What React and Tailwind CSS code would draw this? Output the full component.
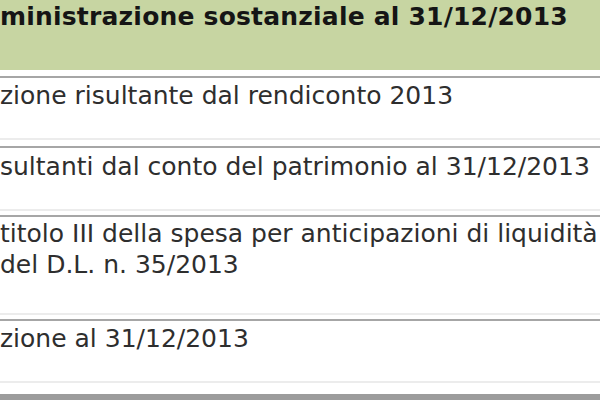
export default function App() {
  const rows = [
    { h: "h-[64px]", pt: "pt-[2px]", lines: ["zione risultante dal rendiconto 2013"] },
    { h: "h-[65px]", pt: "pt-[3px]", lines: ["sultanti dal conto del patrimonio al 31/12/2013"] },
    {
      h: "h-[100px]",
      pt: "pt-[1px]",
      lines: ["titolo III della spesa per anticipazioni di liquidità", "del D.L. n. 35/2013"],
    },
    { h: "h-[64px]", pt: "pt-[2px]", lines: ["zione al 31/12/2013"] },
  ];

  return (
    <div className="w-[600px] h-[400px] overflow-hidden bg-white font-['DejaVu_Sans',Verdana,sans-serif] text-[25px] text-[#2e2e2e]">
      <div className="h-[70px] bg-[#c7d5a2] pt-[2px] leading-[30px] font-bold tracking-[0.2px] text-[#151515] whitespace-nowrap">
        ministrazione sostanziale al 31/12/2013
      </div>

      <div className="mt-[6px] flex flex-col gap-[4px]">
        {rows.map((r, i) => (
          <div
            key={i}
            className={`${r.h} ${r.pt} ${i === 1 ? "mt-[2px]" : ""} border-t-2 border-b-2 border-t-[#a6a6a6] border-b-[#ececec] leading-[31px] whitespace-nowrap`}
          >
            {r.lines.map((l, j) => (
              <div key={j}>{l}</div>
            ))}
          </div>
        ))}
      </div>

      <div className="mt-[11px] h-[6px] bg-[#9c9c9c]" />
    </div>
  );
}
